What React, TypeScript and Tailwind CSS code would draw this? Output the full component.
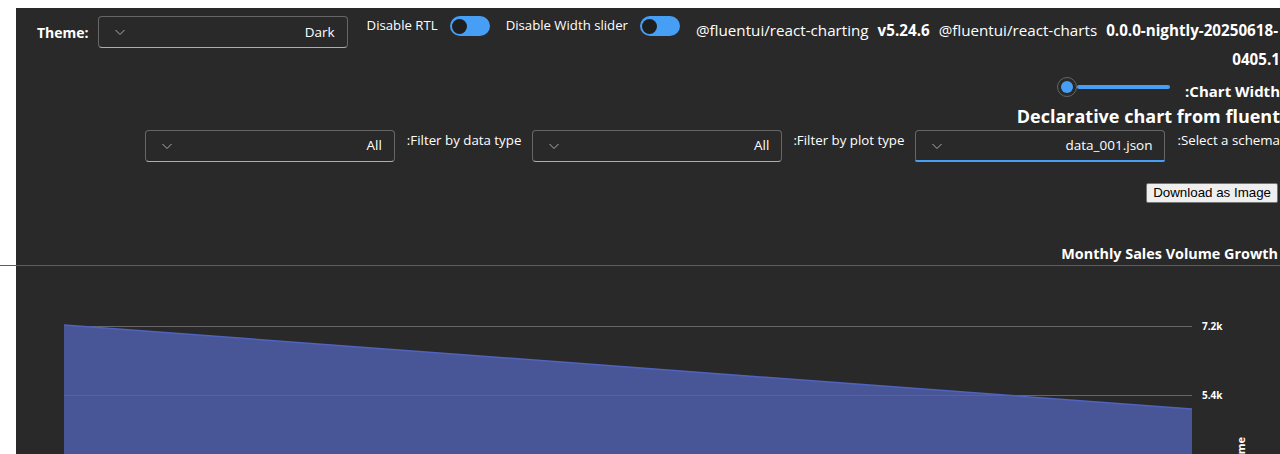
import React from "react";

const font = "font-['Segoe_UI','Open_Sans',sans-serif]";

function Chevron() {
  return (
    <svg width="12" height="12" viewBox="0 0 12 12" className="shrink-0">
      <path d="M1.5 4 L6 8.5 L10.5 4" fill="none" stroke="#adadad" strokeWidth="1" />
    </svg>
  );
}

function Dropdown({ value, focused }: { value: string; focused?: boolean }) {
  return (
    <div
      className={
        "relative flex h-8 w-[250px] shrink-0 items-center justify-between rounded-[4px] border border-[#666666] pl-[15px] pr-3 " +
        (focused ? "border-b-transparent" : "border-b-[#adadad]")
      }
    >
      <Chevron />
      <span className="text-[13.5px] text-white">{value}</span>
      {focused && <div className="absolute -bottom-px -left-px -right-px h-[2px] rounded-b-[4px] bg-[#479ef5]" />}
    </div>
  );
}

function Toggle() {
  return (
    <div className="flex h-5 w-10 shrink-0 items-center rounded-full bg-[#479ef5] px-[2px]">
      <div className="h-[15px] w-[15px] rounded-full bg-[#1f1f1f]" />
    </div>
  );
}

function AreaChart() {
  return (
    <svg width="1264" height="188" className="block">
      <line x1="48" y1="60.5" x2="1176" y2="60.5" stroke="#666666" strokeWidth="1" />
      <path d="M48 59 L1176 143 L1176 188 L48 188 Z" fill="#485597" />
      <line x1="48" y1="129.5" x2="1176" y2="129.5" stroke="#5563a6" strokeWidth="1" />
      <line x1="48" y1="59" x2="1176" y2="143" stroke="#5063be" strokeWidth="1.5" />
      <text x="1186" y="64" fill="#ffffff" fontSize="10" fontWeight="700" fontFamily="Segoe UI, Open Sans, sans-serif">
        7.2k
      </text>
      <text x="1186" y="133" fill="#ffffff" fontSize="10" fontWeight="700" fontFamily="Segoe UI, Open Sans, sans-serif">
        5.4k
      </text>
      <text
        x="1229"
        y="171"
        transform="rotate(-90 1229 171)"
        textAnchor="end"
        fill="#ffffff"
        fontSize="11"
        fontWeight="700"
        fontFamily="Segoe UI, Open Sans, sans-serif"
      >
        Volume
      </text>
    </svg>
  );
}

export default function App() {
  return (
    <div className="h-[454px] overflow-hidden bg-white pl-4 pt-2">
      <div className={"h-[446px] bg-[#292929] text-white " + font}>
        {/* Top controls */}
        <div className="flex items-start pl-[21px] pt-2">
          <div className="flex shrink-0 items-center">
            <span className="text-[14px] font-bold">Theme:</span>
            <div className="ml-[9px]">
              <Dropdown value="Dark" />
            </div>
          </div>
          <div className="ml-[19px] flex shrink-0 items-center">
            <span className="whitespace-nowrap text-[13.2px]">Disable RTL</span>
            <div className="ml-3">
              <Toggle />
            </div>
          </div>
          <div className="ml-4 flex shrink-0 items-center">
            <span className="whitespace-nowrap text-[13.2px]">Disable Width slider</span>
            <div className="ml-3">
              <Toggle />
            </div>
          </div>
          <div className="ml-4 min-w-0 flex-1 text-[15.2px] leading-[29px]">
            <div className="flex gap-[9px] whitespace-nowrap">
              <span>@fluentui/react-charting</span>
              <span className="font-bold">v5.24.6</span>
              <span>@fluentui/react-charts</span>
              <span className="font-bold">0.0.0-nightly-20250618-</span>
            </div>
            <div className="text-right font-bold">0405.1</div>
          </div>
        </div>

        {/* Chart width slider */}
        <div className="-mt-[2px] flex items-center justify-end">
          <div className="flex w-[113px] items-center">
            <div className="flex h-5 w-5 shrink-0 items-center justify-center rounded-full border border-[#666666] bg-[#292929]">
              <div className="h-3 w-3 rounded-full bg-[#479ef5]" />
            </div>
            <div className="h-1 flex-1 rounded-full bg-[#479ef5]" />
          </div>
          <span className="ml-[15px] mt-2 text-[15px] font-bold">:Chart Width</span>
        </div>

        <div className="-mt-px whitespace-nowrap text-right text-[18px] font-bold leading-7">
          Declarative chart from fluent
        </div>

        {/* Filters */}
        <div className="flex items-start justify-end">
          <Dropdown value="All" />
          <span className="ml-3 mr-[11px] whitespace-nowrap text-[13.3px] leading-5">:Filter by data type</span>
          <Dropdown value="All" />
          <span className="ml-[11px] mr-[11px] whitespace-nowrap text-[13.3px] leading-5">:Filter by plot type</span>
          <Dropdown value="data_001.json" focused />
          <span className="ml-3 whitespace-nowrap text-[13.3px] leading-5">:Select a schema</span>
        </div>

        <div className="mt-[21px] flex justify-end pr-[2px]">
          <button className="rounded-[2px] border border-[#767676] bg-[#efefef] px-[6px] py-px font-['Liberation_Sans',sans-serif] text-[13.33px] leading-4 text-black">
            Download as Image
          </button>
        </div>

        <div className="mt-[41px] pr-[2px] text-right text-[14.4px] font-bold leading-5">
          Monthly Sales Volume Growth
        </div>

        <div className="-ml-4 mt-[1px] h-px w-[1296px] bg-[#5e5e5e]" />

        <AreaChart />
      </div>
    </div>
  );
}
